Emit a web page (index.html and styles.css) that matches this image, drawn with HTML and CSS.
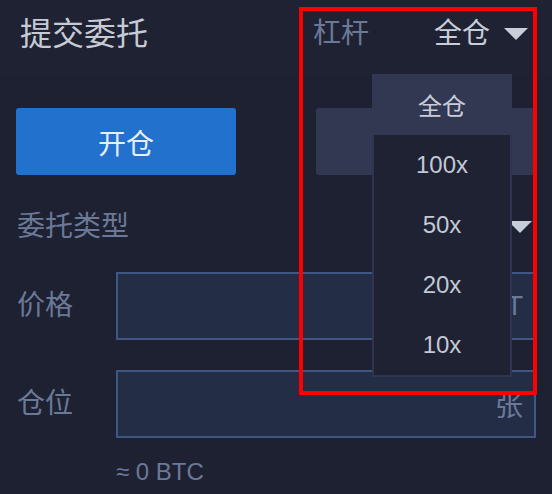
FILE: index.html
```html
<!DOCTYPE html>
<html lang="zh">
<head>
<meta charset="utf-8">
<link rel="stylesheet" href="styles.css">
</head>
<body>
<div class="page">
  <header class="header">
    <h1 class="title">提交委托</h1>
    <div class="leverage">
      <span class="lev-label">杠杆</span>
      <span class="lev-value">全仓<span class="caret"></span></span>
    </div>
  </header>
  <main class="form">
    <div class="actions">
      <button class="btn btn-open">开仓</button>
      <button class="btn btn-close"></button>
    </div>
    <div class="type-row">
      <span class="label">委托类型</span>
      <span class="caret caret-type"></span>
    </div>
    <div class="field">
      <span class="label field-label">价格</span>
      <div class="input"><span class="unit">USDT</span></div>
    </div>
    <div class="field field-second">
      <span class="label field-label">仓位</span>
      <div class="input"><span class="unit">张</span></div>
    </div>
    <div class="estimate">≈ 0 BTC</div>
  </main>

  <div class="menu">
    <div class="menu-head">全仓</div>
    <ul class="menu-list">
      <li>100x</li>
      <li>50x</li>
      <li>20x</li>
      <li>10x</li>
    </ul>
  </div>
  <div class="highlight"></div>
</div>
</body>
</html>
```

FILE: styles.css
```css
* { box-sizing: border-box; }
html, body {
  margin: 0;
  padding: 0;
  background: #1e2131;
}
body {
  width: 552px;
  height: 494px;
  overflow: hidden;
  font-family: "Liberation Sans", "Noto Sans CJK SC", sans-serif;
}
.page {
  position: relative;
  width: 552px;
  height: 494px;
}
.header {
  height: 75px;
  background: #1f2233;
  display: flex;
  align-items: center;
  padding: 0 24px 7px 20px;
}
.title {
  margin: 0;
  font-size: 32px;
  font-weight: 400;
  color: #c6cad3;
  line-height: 40px;
}
.leverage {
  margin-left: auto;
  width: 215px;
  display: flex;
  justify-content: space-between;
  align-items: center;
}
.lev-label {
  font-size: 28px;
  color: #6b7998;
  line-height: 36px;
}
.lev-value {
  font-size: 28px;
  color: #c8ced9;
  line-height: 36px;
  display: flex;
  align-items: center;
}
.caret {
  display: inline-block;
  width: 0;
  height: 0;
  border-left: 12px solid transparent;
  border-right: 12px solid transparent;
  border-top: 12px solid #c8ced9;
}
.lev-value .caret { margin-left: 14px; }

.form {
  padding: 0 16px;
}
.actions {
  margin-top: 33px;
  display: flex;
  gap: 80px;
}
.btn {
  width: 220px;
  height: 67px;
  border: 0;
  border-radius: 3px;
  font-family: inherit;
  font-size: 28px;
  color: #e8eef8;
  padding: 0;
}
.btn-open { background: #2271cd; }
.btn-close { background: #323852; }

.type-row {
  margin-top: 34px;
  height: 36px;
  display: flex;
  align-items: center;
  justify-content: space-between;
  padding-right: 4px;
}
.label {
  font-size: 28px;
  color: #6b7998;
  line-height: 36px;
  padding-left: 1px;
}
.field {
  margin-top: 27px;
  display: flex;
  align-items: center;
}
.field-second { margin-top: 30px; }
.field-label { width: 100px; }
.input {
  width: 420px;
  height: 68px;
  border: 2px solid #3e5785;
  background: #232d45;
  display: flex;
  align-items: center;
  justify-content: flex-end;
  padding-right: 11px;
}
.unit {
  font-size: 28px;
  color: #6b7998;
}
.estimate {
  margin-top: 20px;
  margin-left: 100px;
  font-size: 24px;
  line-height: 28px;
  color: #6b7998;
}

.menu {
  position: absolute;
  left: 372px;
  top: 74px;
  width: 140px;
}
.menu-head {
  height: 61px;
  background: #323852;
  color: #c8ced9;
  font-size: 24px;
  display: flex;
  align-items: center;
  justify-content: center;
}
.menu-list {
  list-style: none;
  margin: 0;
  padding: 0;
  background: #1e2233;
  border: 2px solid #2f3550;
  border-top: 0;
}
.menu-list li {
  height: 60px;
  line-height: 60px;
  text-align: center;
  font-size: 24px;
  color: #c3c9d4;
}
.highlight {
  position: absolute;
  left: 299px;
  top: 7px;
  width: 238px;
  height: 388px;
  border: 4px solid #ff0000;
}
```
